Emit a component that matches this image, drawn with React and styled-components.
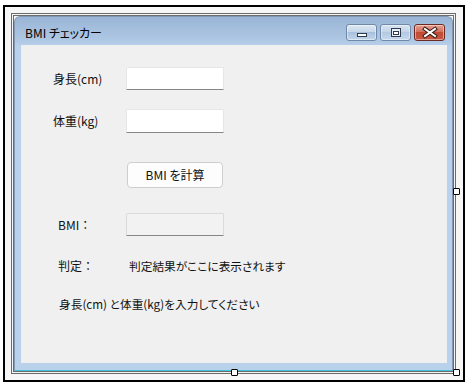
import React from 'react';
import styled, { createGlobalStyle } from 'styled-components';

const Global = createGlobalStyle`
  html, body { margin: 0; padding: 0; background: #fff; }
  body { font-family: "Noto Sans CJK JP", "Noto Sans", sans-serif; }
`;

const Page = styled.div`
  width: 470px;
  height: 386px;
  box-sizing: border-box;
  padding: 5px 0 0 3px;
  background: #fff;
`;

const Canvas = styled.div`
  width: 462px;
  height: 377px;
  box-sizing: border-box;
  border: 2px solid #000;
  background: #f6f6f6;
  padding: 6px 7px 6px 6px;
  display: flex;
`;

const Frame = styled.div`
  flex: 1;
  display: flex;
  position: relative;
  border: 3px double #6b6b6b;
`;

const Handle = styled.div`
  position: absolute;
  width: 7px;
  height: 7px;
  box-sizing: border-box;
  background: #fff;
  border: 1px solid #000;
  border-radius: 1px;
`;

const Window = styled.div`
  flex: 1;
  display: flex;
  flex-direction: column;
  border: 1px solid #8298b3;
  border-bottom-color: #3cc4da;
  border-radius: 6px 6px 0 0;
  background: linear-gradient(#9ab5d5 0px, #adc6e3 22px, #b9d1ea 30px, #b9d1ea);
`;

const TitleBar = styled.div`
  height: 28px;
  box-sizing: border-box;
  display: flex;
  align-items: flex-start;
  padding: 7px 7px 0 10px;
`;

const Title = styled.div`
  flex: 1;
  font-size: 12px;
  line-height: 18px;
  color: #000;
  font-feature-settings: "palt";
`;

const Caption = styled.div`
  display: flex;
  gap: 3px;
`;

const CapButton = styled.div`
  width: 31px;
  height: 17px;
  box-sizing: border-box;
  border: 1px solid ${p => (p.$close ? '#6e2a22' : '#7088a8')};
  border-radius: 3px;
  display: flex;
  align-items: center;
  justify-content: center;
  background: ${p =>
    p.$close
      ? 'linear-gradient(#e6a090 0%, #d2705c 45%, #c14b35 50%, #c8573f 100%)'
      : p.$faded
      ? 'linear-gradient(#d7e3f1 0%, #c4d5e9 45%, #b4c9e2 50%, #c6d8ed 100%)'
      : 'linear-gradient(#dde8f4 0%, #c6d7ea 45%, #a9c0dc 50%, #c2d6ec 100%)'};
  box-shadow: inset 0 0 0 1px rgba(255, 255, 255, 0.45);
`;

const Client = styled.div`
  flex: 1;
  margin: 0 5px 7px 6px;
  background: #f0f0f0;
  display: flex;
  flex-direction: column;
  font-size: 11.7px;
  color: #111;
`;

const Row = styled.div`
  display: grid;
  grid-template-columns: 105px auto;
  align-items: center;
  height: ${p => p.$h}px;
  margin-top: ${p => p.$top}px;
`;

const Label = styled.div`
  padding-left: ${p => p.$indent}px;
  line-height: 16px;
  white-space: nowrap;
  font-size: 12px;
`;

const TextBox = styled.div`
  width: 98px;
  height: ${p => p.$h}px;
  box-sizing: border-box;
  background: ${p => (p.$readonly ? '#f2f2f2' : '#fff')};
  border: 1px solid ${p => (p.$readonly ? '#dadada' : '#e6e6e6')};
  border-bottom-color: #868686;
  border-radius: 2px 2px 0 0;
`;

const Button = styled.div`
  width: 96px;
  height: 26px;
  box-sizing: border-box;
  margin-left: 1px;
  background: #fdfdfd;
  border: 1px solid #cecece;
  border-radius: 4px;
  display: flex;
  align-items: center;
  justify-content: center;
  line-height: 16px;
  font-size: 12px;
  font-feature-settings: "palt";
`;

const Result = styled.div`
  padding-left: 3px;
  line-height: 16px;
  white-space: nowrap;
  font-feature-settings: "palt";
`;

const Message = styled.div`
  margin-top: 18px;
  padding-left: 38px;
  line-height: 20px;
  white-space: nowrap;
  font-feature-settings: "palt";
`;

const MinIcon = () => (
  <svg width="12" height="15" viewBox="0 0 12 15">
    <rect x="1.5" y="8.5" width="9" height="3" fill="#fff" stroke="#2f3b4a" strokeWidth="1" />
  </svg>
);

const MaxIcon = () => (
  <svg width="12" height="15" viewBox="0 0 12 15">
    <rect x="1.5" y="3.5" width="9" height="8" fill="#e8eef6" stroke="#2f3b4a" strokeWidth="1" />
    <rect x="3.5" y="6.5" width="5" height="3" fill="#fff" stroke="#2f3b4a" strokeWidth="1" />
  </svg>
);

const CloseIcon = () => (
  <svg width="18" height="13" viewBox="0 0 18 13">
    <path d="M4 3 L14 10 M14 3 L4 10" stroke="#3a1e1a" strokeWidth="4" strokeLinecap="square" />
    <path d="M4 3 L14 10 M14 3 L4 10" stroke="#fff" strokeWidth="2" strokeLinecap="square" />
  </svg>
);

export default function App() {
  return (
    <Page>
      <Global />
      <Canvas>
        <Frame>
          <Window>
            <TitleBar>
              <Title>BMI チェッカー</Title>
              <Caption>
                <CapButton><MinIcon /></CapButton>
                <CapButton $faded><MaxIcon /></CapButton>
                <CapButton $close><CloseIcon /></CapButton>
              </Caption>
            </TitleBar>
            <Client>
              <Row $top={22} $h={23}>
                <Label $indent={32}>身長(cm)</Label>
                <TextBox $h={23} />
              </Row>
              <Row $top={19} $h={24}>
                <Label $indent={32}>体重(kg)</Label>
                <TextBox $h={24} />
              </Row>
              <Row $top={29} $h={26}>
                <span />
                <Button>BMI を計算</Button>
              </Row>
              <Row $top={25} $h={23}>
                <Label $indent={37}>BMI：</Label>
                <TextBox $h={23} $readonly />
              </Row>
              <Row $top={20} $h={20}>
                <Label $indent={37}>判定：</Label>
                <Result>判定結果がここに表示されます</Result>
              </Row>
              <Message>身長(cm) と体重(kg)を入力してください</Message>
            </Client>
          </Window>
          <Handle style={{ right: -7, top: 172 }} />
          <Handle style={{ left: 217, bottom: -5 }} />
          <Handle style={{ right: -7, bottom: -5 }} />
        </Frame>
      </Canvas>
    </Page>
  );
}
